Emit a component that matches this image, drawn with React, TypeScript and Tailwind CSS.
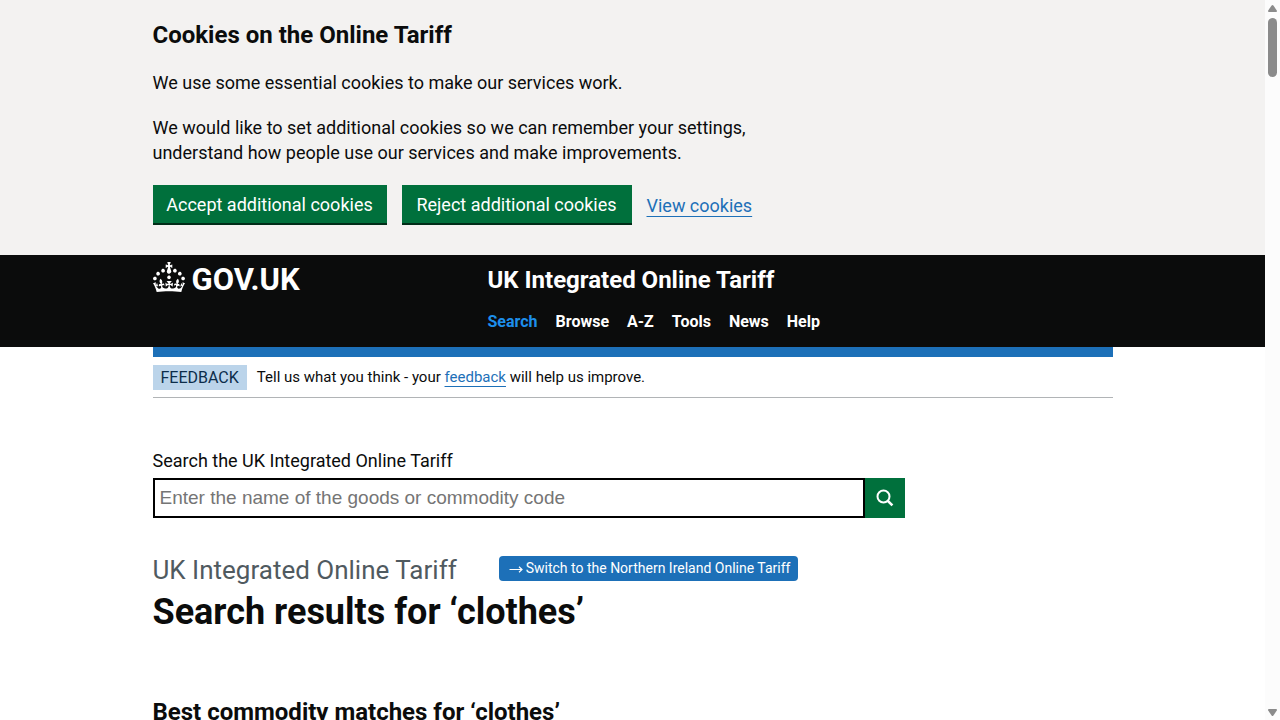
import React from "react";

const navItems = ["Search", "Browse", "A-Z", "Tools", "News", "Help"];

const linkClass = "text-[#1d70b8] underline decoration-1 underline-offset-4";

function Container({ className = "", children }: { className?: string; children: React.ReactNode }) {
  return <div className={"mx-auto w-full max-w-[960px] " + className}>{children}</div>;
}

function Crown() {
  return (
    <svg className="h-[30px] w-8 shrink-0" viewBox="0 0 32 30" fill="currentColor" aria-hidden="true">
      <path d="M22.6 10.4c-1 .4-2-.1-2.4-1-.4-.9.1-2 1-2.4.9-.4 2 .1 2.4 1s-.1 2-1 2.4m-5.9 6.7c-.9.4-2-.1-2.4-1-.4-.9.1-2 1-2.4.9-.4 2 .1 2.4 1s-.1 2-1 2.4m10.8-3.7c-1 .4-2-.1-2.4-1-.4-.9.1-2 1-2.4.9-.4 2 .1 2.4 1s0 2-1 2.4m3.3 4.8c-1 .4-2-.1-2.4-1-.4-.9.1-2 1-2.4.9-.4 2 .1 2.4 1s-.1 2-1 2.4M17 4.7l2.3 1.2V2.5l-2.3.7-.2-.2.9-3h-3.4l.9 3-.2.2c-.1.1-2.3-.7-2.3-.7v3.4L15 4.7c.1.1.1.2.2.2l-1.3 4c-.1.2-.1.4-.1.6 0 1.1.8 2 1.9 2.2h.7c1-.2 1.9-1.1 1.9-2.1 0-.2 0-.4-.1-.6l-1.3-4c-.1-.2 0-.2.1-.3m-7.6 5.7c.9.4 2-.1 2.4-1 .4-.9-.1-2-1-2.4-.9-.4-2 .1-2.4 1s0 2 1 2.4m-5 3c.9.4 2-.1 2.4-1 .4-.9-.1-2-1-2.4-.9-.4-2 .1-2.4 1s.1 2 1 2.4m-3.2 4.8c.9.4 2-.1 2.4-1 .4-.9-.1-2-1-2.4-.9-.4-2 .1-2.4 1s0 2 1 2.4m14.8 11c4.4 0 8.6.3 12.3.8 1.1-4.5 2.4-7 3.7-8.8l-2.5-.9c.2 1.3.3 1.9 0 2.7-.4-.4-.8-1.1-1.1-2.3l-1.2 4c.7-.5 1.3-.8 2-.9-1.1 2.5-2.6 3.1-3.5 3-1.1-.2-1.7-1.2-1.5-2.1.3-1.2 1.5-1.5 2.1-.1 1.1-2.3-.8-3-2-2.3 1.9-1.9 2.1-3.5.6-5.6-2.1 1.6-2.1 3.2-1.2 5.5-1.2-1.4-3.2-.6-2.5 1.6.9-1.4 2.1-.5 1.9.8-.2 1.1-1.7 2.1-3.5 1.9-2.7-.2-2.9-2.1-2.9-3.6.7-.1 1.9.5 2.9 1.9l.4-4.3c-1.1 1.1-2.1 1.4-3.2 1.4.4-1.2 2.1-3 2.1-3h-5.4s1.7 1.9 2.1 3c-1.1 0-2.1-.2-3.2-1.4l.4 4.3c1-1.4 2.2-2 2.9-1.9-.1 1.5-.2 3.4-2.9 3.6-1.9.2-3.4-.8-3.5-1.9-.2-1.3 1-2.2 1.9-.8.7-2.3-1.2-3-2.5-1.6.9-2.2.9-3.9-1.2-5.5-1.5 2-1.3 3.7.6 5.6-1.2-.7-3.1 0-2 2.3.6-1.4 1.8-1.1 2.1.1.2.9-.3 1.9-1.5 2.1-.9.2-2.4-.5-3.5-3 .6 0 1.2.3 2 .9l-1.2-4c-.3 1.1-.7 1.9-1.1 2.3-.3-.8-.2-1.4 0-2.7l-2.9.9C1.3 23 2.6 25.5 3.7 30c3.7-.5 7.9-.8 12.3-.8" />
    </svg>
  );
}

function CookieBanner() {
  return (
    <section aria-label="Cookies on the Online Tariff" className="bg-[#f3f2f1] pt-5 pb-[30px]">
      <Container>
        <h2 className="text-2xl leading-[30px] font-bold">Cookies on the Online Tariff</h2>
        <p className="mt-5 max-w-[630px]">We use some essential cookies to make our services work.</p>
        <p className="mt-5 max-w-[630px]">
          We would like to set additional cookies so we can remember your settings,{" "}
          <br />
          understand how people use our services and make improvements.
        </p>
        <div className="mt-5 flex items-center gap-[15px]">
          <button type="button" className="h-10 w-[234px] border-b-2 border-[#002d18] bg-[#00703c] text-white">
            Accept additional cookies
          </button>
          <button type="button" className="h-10 w-[230px] border-b-2 border-[#002d18] bg-[#00703c] text-white">
            Reject additional cookies
          </button>
          <a href="#cookies" className={linkClass}>
            View cookies
          </a>
        </div>
      </Container>
    </section>
  );
}

function Header() {
  return (
    <header className="bg-[#0b0c0c] text-white">
      <Container className="flex pt-[7px] pb-[13px]">
        <a href="#home" className="flex w-[335px] items-start gap-[7px]">
          <Crown />
          <span className="text-[31px] leading-9 font-bold">GOV.UK</span>
        </a>
        <div>
          <a href="#tariff" className="block pt-[3px] text-2xl leading-[30px] font-bold">
            UK Integrated Online Tariff
          </a>
          <nav aria-label="Menu" className="mt-[14px]">
            <ul className="flex gap-[18px] text-base leading-[25px] font-bold">
              {navItems.map((item, i) => (
                <li key={item}>
                  <a href={"#" + item} className={i === 0 ? "text-[#1d8feb]" : "text-white"}>
                    {item}
                  </a>
                </li>
              ))}
            </ul>
          </nav>
        </div>
      </Container>
    </header>
  );
}

function FeedbackBanner() {
  return (
    <Container className="border-t-[10px] border-t-[#1d70b8]">
      <div className="flex items-center gap-[10px] border-b border-[#b1b4b6] pt-2 pb-[7px]">
        <strong className="bg-[#bbd4ea] px-2 text-base leading-[25px] font-normal text-[#0c2d4a]">FEEDBACK</strong>
        <span className="text-[15px] leading-[25px]">
          Tell us what you think - your{" "}
          <a href="#feedback" className={linkClass}>
            feedback
          </a>{" "}
          will help us improve.
        </span>
      </div>
    </Container>
  );
}

function Search() {
  return (
    <form className="max-w-[752px]" onSubmit={(e) => e.preventDefault()}>
      <label htmlFor="q" className="block leading-[25px]">
        Search the UK Integrated Online Tariff
      </label>
      <div className="mt-[5px] flex">
        <input
          id="q"
          type="text"
          placeholder="Enter the name of the goods or commodity code"
          className="h-10 min-w-0 flex-1 border-2 border-black bg-white px-[5px] font-['Liberation_Sans',Arial,sans-serif] text-[19px] placeholder:text-[#757575]"
        />
        <button
          type="submit"
          aria-label="Search"
          className="flex h-10 w-10 items-center justify-center bg-[#00703c] text-white"
        >
          <svg className="size-5" viewBox="0 0 20 20" fill="none" stroke="currentColor" strokeWidth="2" aria-hidden="true">
            <circle cx="8.5" cy="8.5" r="6" />
            <path d="M12.8 12.8l4.6 4.6" strokeWidth="2.6" />
          </svg>
        </button>
      </div>
    </form>
  );
}

function Arrow() {
  return (
    <svg className="h-3 w-[14px] shrink-0" viewBox="0 0 14 12" fill="none" stroke="currentColor" strokeWidth="1.2" aria-hidden="true">
      <path d="M.5 6.5h12.5M10 3.8l3 2.7-3 2.7" />
    </svg>
  );
}

function Scrollbar() {
  return (
    <div className="flex w-[15px] shrink-0 flex-col items-center bg-[#fcfcfc] text-[#8b8b8b]" aria-hidden="true">
      <svg className="mt-[5px] h-[7px] w-[9px]" viewBox="0 0 9 7" fill="currentColor">
        <path d="M3.6.6q.9-1.2 1.8 0L8.8 5.4Q9.4 7 8 7H1Q-.4 7 .2 5.4z" />
      </svg>
      <div className="mt-[6px] h-[59px] w-[9px] rounded-full bg-[#8b8b8b]" />
      <svg className="mt-auto mb-1 h-[7px] w-[9px]" viewBox="0 0 9 7" fill="currentColor">
        <path d="M3.6 6.4q.9 1.2 1.8 0L8.8 1.6Q9.4 0 8 0H1Q-.4 0 .2 1.6z" />
      </svg>
    </div>
  );
}

export default function App() {
  return (
    <div className="flex h-screen overflow-hidden bg-white font-[Roboto,Arial,sans-serif] text-[18px] leading-[25px] text-[#0b0c0c]">
      <div className="min-w-0 flex-1 overflow-hidden">
        <CookieBanner />
        <Header />
        <FeedbackBanner />
        <main>
          <Container className="pt-[50px]">
            <Search />
            <div className="mt-[35px] flex items-start gap-[42px]">
              <span className="text-[26px] leading-[35px] text-[#505a5f]">UK Integrated Online Tariff</span>
              <a
                href="#northern-ireland"
                className="my-[3px] flex items-center gap-[3px] rounded bg-[#1d70b8] pr-2 pl-[10px] text-sm leading-[25px] text-white"
              >
                <Arrow />
                Switch to the Northern Ireland Online Tariff
              </a>
            </div>
            <h1 className="mt-1 text-4xl leading-10 font-bold">Search results for ‘clothes’</h1>
            <h2 className="mt-[65px] text-2xl leading-[30px] font-bold">Best commodity matches for ‘clothes’</h2>
          </Container>
        </main>
      </div>
      <Scrollbar />
    </div>
  );
}
